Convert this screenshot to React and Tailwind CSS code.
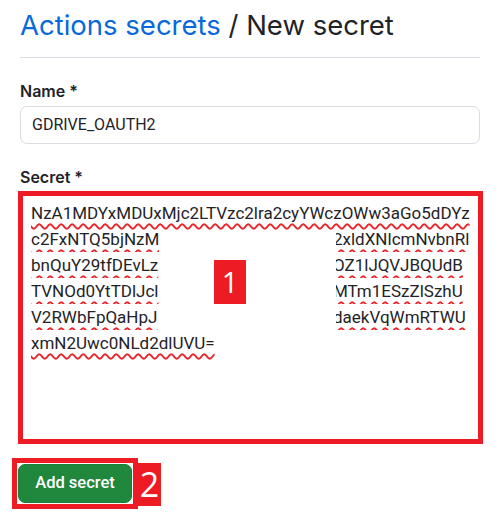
import React from 'react';

const rows = [
  ['NzA1MDYxMDUxMjc2LTVzc2lra2cyYWczOWw3aGo5dDYz', null],
  ['c2FxNTQ5bjNzM', '2xldXNlcmNvbnRl'],
  ['bnQuY29tfDEvLz', 'OZ1lJQVJBQUdB'],
  ['TVNOd0YtTDlJcl', 'MTm1ESzZlSzhU'],
  ['V2RWbFpQaHpJ', 'daekVqWmRTWU'],
  ['xmN2Uwc0NLd2dlUVU=', null],
];

const squiggle = 'underline decoration-wavy decoration-[#e8262b] decoration-[1.5px] underline-offset-[4px]';

const App = () => {
  return (
    <div className="w-[500px] h-[519px] bg-white px-5 pt-[5px] overflow-hidden" style={{ fontFamily: 'Inter, "Liberation Sans", sans-serif' }}>
      <h1 className="text-[27.5px] leading-[40px] text-[#1f2328] pb-[12px] border-b border-[#d8dee4]">
        <span className="text-[#0969da]">Actions secrets</span> / New secret
      </h1>

      <div className="mt-[22px]">
        <label className="block text-[16px] font-semibold text-[#1f2328] leading-[22px]">Name *</label>
        <div
          className="mt-[4px] h-[38px] w-full rounded-[7px] border border-[#d8dee4] px-[11px] flex items-center text-[16px] text-[#1f2328]"
          style={{ fontFamily: 'Roboto, sans-serif' }}
        >
          GDRIVE_OAUTH2
        </div>
      </div>

      <div className="mt-[22px]">
        <label className="block text-[16px] font-semibold text-[#1f2328] leading-[22px]">Secret *</label>
        <div className="relative mt-[3px] ml-[-2px] w-[465px] h-[253px] border-[5px] border-[#ed1c24] pl-[8px] pt-[4px]">
          <div className="text-[17px] leading-[26px] text-[#1f2328]" style={{ fontFamily: 'Roboto, sans-serif' }}>
            {rows.map(([left, right], i) => (
              <div key={i} className="flex whitespace-nowrap">
                {right ? (
                  <>
                    <span className="w-[128px] shrink-0 overflow-hidden">
                      <span className={squiggle}>{left}</span>
                    </span>
                    <span className="ml-[177px] overflow-hidden">
                      <span className={`${squiggle} ml-[-3px] inline-block`}>{right}</span>
                    </span>
                  </>
                ) : (
                  <span className={squiggle}>{left}</span>
                )}
              </div>
            ))}
          </div>
          <div className="absolute left-[191px] top-[64px] w-[32px] h-[44px] bg-[#ed1c24] text-white flex items-center justify-center text-[29px]" style={{ fontFamily: '"Open Sans", sans-serif' }}>
            1
          </div>
        </div>
      </div>

      <div className="mt-[14px] ml-[-8px] flex items-start">
        <div className="border-[5px] border-[#ed1c24] p-[1px]">
          <button
            className="h-[39px] w-[114px] rounded-[7px] bg-[#1f883d] border border-[#1a7f37] text-white text-[16.5px] font-medium"
            style={{ fontFamily: 'Roboto, sans-serif' }}
          >
            Add secret
          </button>
        </div>
        <div className="mt-[5px] w-[23px] h-[43px] bg-[#ed1c24] text-white flex items-center justify-center text-[34px]" style={{ fontFamily: '"Open Sans", sans-serif' }}>
          2
        </div>
      </div>
    </div>
  );
};

export default App;
